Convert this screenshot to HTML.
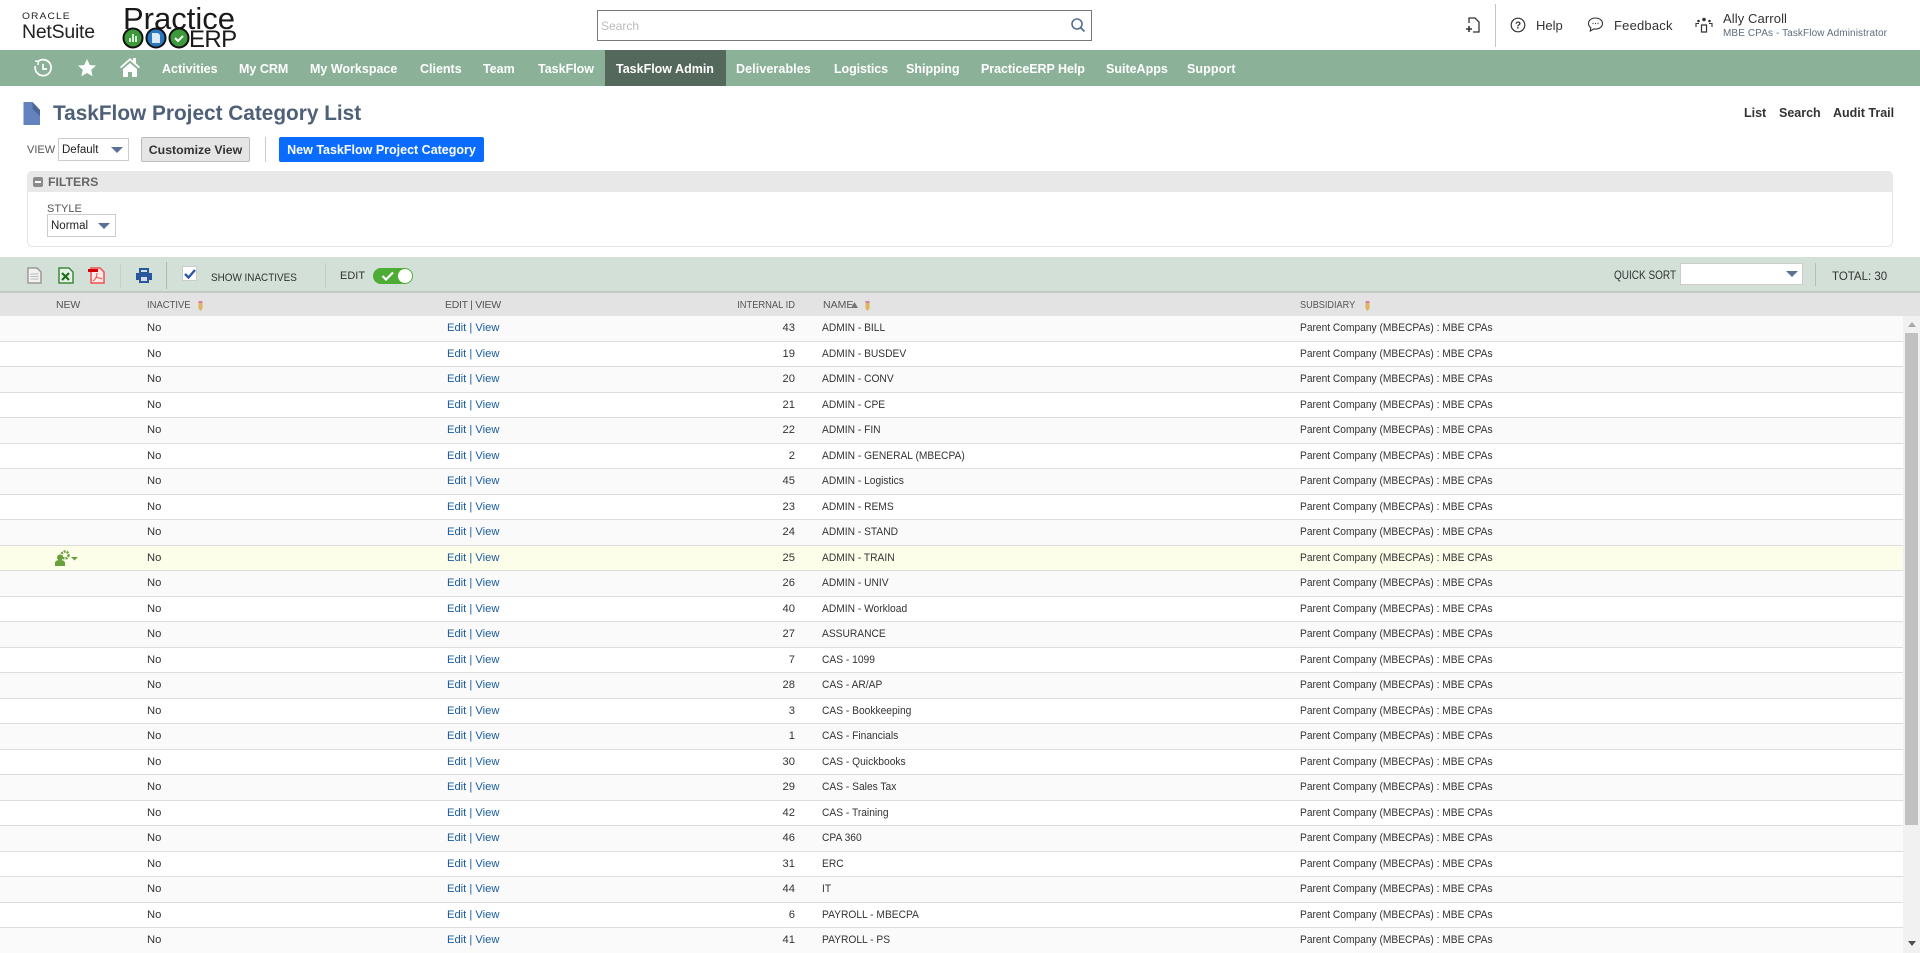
<!DOCTYPE html>
<html><head><meta charset="utf-8"><title>TaskFlow Project Category List</title>
<style>
html,body{margin:0;padding:0;background:#fff;width:1920px;height:953px;overflow:hidden;font-family:"Liberation Sans",sans-serif;color:#333}
.p{position:absolute;white-space:nowrap}
svg{position:absolute;display:block}
.nav{position:absolute;left:0;top:50px;width:1920px;height:36px;background:#8bb298}
.nav span{position:absolute;top:11px;font-size:12.5px;font-weight:bold;color:#fff;line-height:16px;white-space:nowrap}
.nav .act{position:absolute;left:605px;top:0;width:121px;height:36px;background:#54695b}
.lab{font-size:11px;color:#555;line-height:13px}
.sel{position:absolute;background:#fff;border:1px solid #ccc;box-sizing:border-box;font-size:11.5px;color:#222}
.arr{position:absolute;width:0;height:0;border-left:6px solid transparent;border-right:6px solid transparent;border-top:6px solid #5a7096}
.sep{position:absolute;width:1px;background:#bbb}
.th{position:absolute;top:0;font-size:10.5px;line-height:25px;color:#555;white-space:nowrap}
.sc{transform:scaleX(.9);transform-origin:left center}
.sr{transform:scaleX(.89);transform-origin:right center}
#rows{position:absolute;left:0;top:316px;width:1903px;height:637px;overflow:hidden}
.r{position:relative;height:25.5px;box-sizing:border-box;border-bottom:1px solid #ddd;font-size:11.2px;line-height:25.5px;color:#333;background:#fff}
.r:nth-child(odd){background:#fafafa}
.r.h{background:#fdfeea}
.r b{font-weight:normal;position:absolute;top:0;white-space:nowrap}
.n{left:147px}.e{left:447px;color:#1a5c9e}.i{right:1108px}
.m{left:822px;transform:scaleX(.915);transform-origin:left center}
.s{left:1300px;transform:scaleX(.913);transform-origin:left center}
</style></head><body>

<div class="p" style="left:22px;top:12px;font-size:9.5px;letter-spacing:1px;color:#222;transform:scaleX(1.08);transform-origin:left;line-height:10px">ORACLE</div>
<div class="p" style="left:22px;top:21px;font-size:19.5px;color:#222;line-height:23px;letter-spacing:-.25px">NetSuite</div>

<div class="p" style="left:123px;top:1px;font-size:31px;line-height:36px;color:#1a1a1a">Practice</div>
<svg style="left:122px;top:27px" width="70" height="22" viewBox="0 0 70 22">
<circle cx="11" cy="11" r="9.5" fill="#3c9a3c" stroke="#111" stroke-width="2"/><circle cx="34" cy="11" r="9.5" fill="#2a78c0" stroke="#111" stroke-width="2"/><circle cx="57" cy="11" r="9.5" fill="#3c9a3c" stroke="#111" stroke-width="2"/>
<path d="M7 15v-4h2v4zM10 15V7h2v8zM13 15v-6h2v6z" fill="#d8efd8"/><path d="M30 6h6l2 2v8h-8z" fill="#dcebf8"/><path d="M53 11l3 3 5-5" fill="none" stroke="#fff" stroke-width="2"/></svg>
<div class="p" style="left:189px;top:28px;font-size:24px;line-height:24px;color:#1a1a1a;letter-spacing:-.6px">ERP</div>

<div class="p" style="left:597px;top:10px;width:495px;height:31px;box-sizing:border-box;border:1px solid #777;background:#fff"></div>
<div class="p" style="left:601px;top:19px;font-size:12px;color:#bbb;line-height:14px">Search</div>
<svg style="left:1070px;top:17px" width="16" height="16" viewBox="0 0 16 16"><circle cx="7" cy="7" r="5" fill="none" stroke="#56708f" stroke-width="1.6"/><path d="M10.5 10.5L14.5 14.5" stroke="#56708f" stroke-width="1.8"/></svg>

<svg style="left:1465px;top:16px" width="18" height="18" viewBox="0 0 18 18" fill="none" stroke="#333" stroke-width="1.3"><path d="M4 7V2h6l4 4v10H8"/><path d="M4 10v6M1 13h6" stroke-width="1.6"/></svg>
<div class="sep" style="left:1495px;top:4px;height:43px;background:#c4c4c4"></div>
<svg style="left:1510px;top:17px" width="16" height="16" viewBox="0 0 16 16"><circle cx="8" cy="8" r="6.8" fill="none" stroke="#333" stroke-width="1.2"/><text x="8" y="11.5" font-size="10" text-anchor="middle" font-family="Liberation Sans" font-weight="bold" fill="#333">?</text></svg>
<div class="p" style="left:1536px;top:18px;font-size:13px;line-height:15px;color:#333">Help</div>
<svg style="left:1587px;top:16px" width="17" height="17" viewBox="0 0 17 17"><path d="M8.5 2C4.500 2 1.500 4.300 1.500 7.500c0 1.800 1 3.200 2.300 4.200L3.300 15l3.400-2.100c.6.100 1.200.2 1.800.2 4 0 7-2.500 7-5.600S12.500 2 8.500 2z" fill="none" stroke="#333" stroke-width="1.1"/><path d="M5.500 7.500h1M8 7.500h1M10.500 7.500h1" stroke="#333" stroke-width="1.3"/></svg>
<div class="p" style="left:1614px;top:18px;font-size:13px;line-height:15px;color:#333;letter-spacing:.2px">Feedback</div>
<svg style="left:1695px;top:16px" width="18" height="18" viewBox="0 0 18 18" fill="#333"><circle cx="9" cy="3.500" r="1.800"/><circle cx="3.500" cy="5" r="1.300"/><circle cx="14.500" cy="5" r="1.300"/><path d="M6.500 9h5v7h-5z" fill="none" stroke="#333" stroke-width="1.200"/><path d="M1 11V7.500h3M17 11V7.500h-3" fill="none" stroke="#333" stroke-width="1.100"/></svg>
<div class="p" style="left:1723px;top:11px;font-size:13px;line-height:15px;color:#333;letter-spacing:.1px">Ally Carroll</div>
<div class="p" style="left:1723px;top:28px;font-size:10px;line-height:12px;color:#5f6d7c;letter-spacing:.1px">MBE CPAs - TaskFlow Administrator</div>

<div class="nav">
<div class="act"></div>
<svg style="left:33px;top:8px" width="20" height="20" viewBox="0 0 20 20" fill="none" stroke="#fff" stroke-width="1.7"><path d="M5 3.500A8 8 0 1 1 2.300 8"/><path d="M2 3l3.300.3L5 7" stroke-width="1.500"/><path d="M10 6v5H14"/></svg>
<svg style="left:77px;top:8px" width="20" height="20" viewBox="0 0 20 20"><path d="M10 1l2.700 6 6.300.6-4.800 4.300 1.400 6.300L10 15l-5.600 3.200 1.400-6.300L1 7.600 7.300 7z" fill="#fff"/></svg>
<svg style="left:119px;top:6px" width="22" height="22" viewBox="0 0 22 22"><path d="M1 11L11 2l3 2.700V2h3v5.400L21 11l-1.200 1.300L11 4.500 2.200 12.300z" fill="#fff"/><path d="M4 13l7-6 7 6v8h-5v-5H9v5H4z" fill="#fff"/></svg>
<span style="left:162px">Activities</span>
<span style="left:239px">My CRM</span>
<span style="left:310px">My Workspace</span>
<span style="left:420px">Clients</span>
<span style="left:483px">Team</span>
<span style="left:538px">TaskFlow</span>
<span style="left:616px">TaskFlow Admin</span>
<span style="left:736px;letter-spacing:.1px">Deliverables</span>
<span style="left:834px;letter-spacing:-.1px">Logistics</span>
<span style="left:906px">Shipping</span>
<span style="left:981px;letter-spacing:-.05px">PracticeERP Help</span>
<span style="left:1106px">SuiteApps</span>
<span style="left:1187px;letter-spacing:.1px">Support</span>
</div>

<svg style="left:22px;top:101px" width="19" height="25" viewBox="0 0 19 25"><path d="M1.500 1h9L18 9v15H1.500z" fill="#6283bd"/><path d="M10.500 1L18 9v6L10.500 8z" fill="#4b6796"/></svg>
<div class="p" style="left:53px;top:101px;font-size:20.8px;line-height:25px;font-weight:bold;color:#4d5f79">TaskFlow Project Category List</div>
<div class="p" style="left:1744px;top:106px;font-size:12.5px;line-height:15px;font-weight:bold;color:#333">List</div>
<div class="p" style="left:1779px;top:106px;font-size:12.5px;line-height:15px;font-weight:bold;color:#333">Search</div>
<div class="p" style="left:1833px;top:106px;font-size:12.5px;line-height:15px;font-weight:bold;color:#333">Audit Trail</div>

<div class="p lab" style="left:27px;top:144px">VIEW</div>
<div class="sel" style="left:58px;top:138px;width:71px;height:23px;line-height:23px;padding-left:3px">Default<div class="arr" style="left:52px;top:8px"></div></div>
<div class="p" style="left:141px;top:137px;width:109px;height:25px;box-sizing:border-box;background:#e5e5e5;border:1px solid #bbb;border-radius:2px;font-size:12.3px;font-weight:bold;color:#333;text-align:center;line-height:25px">Customize View</div>
<div class="sep" style="left:265px;top:137px;height:25px;background:#ccc"></div>
<div class="p" style="left:279px;top:137px;width:205px;height:25px;background:#0a6cff;border-radius:2px;font-size:12.5px;font-weight:bold;color:#fff;text-align:center;line-height:27px">New TaskFlow Project Category</div>

<div class="p" style="left:27px;top:171px;width:1866px;height:76px;box-sizing:border-box;border:1px solid #e4e4e4;border-radius:5px;background:#fff"></div>
<div class="p" style="left:27px;top:171px;width:1866px;height:21px;background:#e8e8e8;border-radius:5px 5px 0 0"></div>
<div class="p" style="left:33px;top:177px;width:10px;height:10px;background:#8c8c8c;border-radius:2px"></div>
<div class="p" style="left:35px;top:181px;width:6px;height:2px;background:#fff"></div>
<div class="p" style="left:48px;top:175px;font-size:12.3px;line-height:15px;font-weight:bold;color:#666">FILTERS</div>
<div class="p lab" style="left:47px;top:203px">STYLE</div>
<div class="sel" style="left:47px;top:214px;width:69px;height:23px;line-height:23px;padding-left:3px">Normal<div class="arr" style="left:50px;top:8px"></div></div>

<div class="p" style="left:0;top:257px;width:1920px;height:35px;background:#d2e0d7"></div>
<div class="p" style="left:0;top:291px;width:1920px;height:2px;background:#c4cbc6"></div>
<svg style="left:27px;top:267px" width="15" height="17" viewBox="0 0 15 17"><path d="M1 1h9l4 4v11H1z" fill="#f2f2f2" stroke="#999" stroke-width="1.5"/><path d="M3.500 7h8M3.500 9.500h8M3.500 12h8" stroke="#bbb"/></svg>
<svg style="left:58px;top:267px" width="16" height="17" viewBox="0 0 16 17"><path d="M1 1h10l4 4v11H1z" fill="#e8f1e8" stroke="#3c8a3c" stroke-width="1.5"/><path d="M4 6l7 7M11 6l-7 7" stroke="#1e6e1e" stroke-width="2.2"/></svg>
<svg style="left:88px;top:267px" width="17" height="17" viewBox="0 0 17 17"><path d="M3 1h9l4 4v11H3z" fill="#fbe9e9" stroke="#f05050" stroke-width="1.5"/><path d="M0 2h10v3H0z" fill="#d30000"/><path d="M9 6c0 4-2 7-4 8M8 10c2 1 4 1 6 2" fill="none" stroke="#f05050"/></svg>
<div class="sep" style="left:120px;top:264px;height:24px;background:#c3d0c8"></div>
<svg style="left:135px;top:267px" width="18" height="17" viewBox="0 0 18 17"><path d="M4 1h10v5H4zM1 6h16v7h-3v3H4v-3H1z" fill="#28579b"/><path d="M6 10h6v4H6z" fill="#d5dfe9"/><path d="M6 3h6v2H6z" fill="#d5dfe9"/></svg>
<div class="sep" style="left:166px;top:262px;height:27px;background:#b0b8b2"></div>
<div class="p" style="left:182px;top:266px;width:15px;height:15px;background:#fff;border:1px solid #ccc;box-sizing:border-box"></div>
<svg style="left:184px;top:268px" width="12" height="11" viewBox="0 0 12 11"><path d="M1 6l3.500 3.500L11 2" fill="none" stroke="#2a5aa0" stroke-width="2.4"/></svg>
<div class="p sc" style="left:211px;top:272px;font-size:11px;line-height:13px;color:#333">SHOW INACTIVES</div>
<div class="sep" style="left:325px;top:263px;height:25px;background:#c3d0c8"></div>
<div class="p" style="left:340px;top:270px;font-size:11px;line-height:13px;color:#333">EDIT</div>
<div class="p" style="left:373px;top:268px;width:40px;height:16px;background:#4dac34;border-radius:8px"></div>
<div class="p" style="left:398px;top:269px;width:14px;height:14px;background:#fff;border-radius:50%"></div>
<svg style="left:381px;top:271px" width="14" height="10" viewBox="0 0 14 10"><path d="M1.500 5l3.500 3.500L12 1.500" fill="none" stroke="#fff" stroke-width="2.2"/></svg>
<div class="p" style="left:1614px;top:270px;font-size:11.5px;line-height:13px;color:#333;transform:scaleX(.87);transform-origin:left center">QUICK SORT</div>
<div class="sel" style="left:1680px;top:263px;width:123px;height:22px"><div class="arr" style="left:105px;top:7px"></div></div>
<div class="sep" style="left:1815px;top:263px;height:23px"></div>
<div class="p" style="left:1832px;top:270px;font-size:11.5px;line-height:14px;color:#333">TOTAL: 30</div>

<div class="p" style="left:0;top:293px;width:1920px;height:23px;background:#e3e3e3">
<div class="th" style="left:56px;letter-spacing:-.1px">NEW</div>
<div class="th sc" style="left:147px">INACTIVE</div>
<div class="th" style="left:445px;letter-spacing:-.3px">EDIT | VIEW</div>
<div class="th sr" style="right:1125px">INTERNAL ID</div>
<div class="th" style="left:823px">NAME</div>
<svg style="left:851px;top:9px" width="7" height="6" viewBox="0 0 7 6"><path d="M3.500 0L7 6H0z" fill="#777"/></svg>
<div class="th" style="left:1300px;transform:scaleX(.87);transform-origin:left center">SUBSIDIARY</div>
<svg style="left:198px;top:8px" width="5" height="10" viewBox="0 0 5 10"><path d="M.5 0h4v7.500L2.500 10 .5 7.500z" fill="#e0b35c"/><path d="M.5 0h4v2h-4z" fill="#d87ba8"/></svg>
<svg style="left:865px;top:8px" width="5" height="10" viewBox="0 0 5 10"><path d="M.5 0h4v7.500L2.500 10 .5 7.500z" fill="#e0b35c"/><path d="M.5 0h4v2h-4z" fill="#d87ba8"/></svg>
<svg style="left:1365px;top:8px" width="5" height="10" viewBox="0 0 5 10"><path d="M.5 0h4v7.500L2.500 10 .5 7.500z" fill="#e0b35c"/><path d="M.5 0h4v2h-4z" fill="#d87ba8"/></svg>
</div>

<div id="rows">
<div class="r"><b class="n">No</b><b class="e">Edit | View</b><b class="i">43</b><b class="m">ADMIN - BILL</b><b class="s">Parent Company (MBECPAs) : MBE CPAs</b></div>
<div class="r"><b class="n">No</b><b class="e">Edit | View</b><b class="i">19</b><b class="m">ADMIN - BUSDEV</b><b class="s">Parent Company (MBECPAs) : MBE CPAs</b></div>
<div class="r"><b class="n">No</b><b class="e">Edit | View</b><b class="i">20</b><b class="m">ADMIN - CONV</b><b class="s">Parent Company (MBECPAs) : MBE CPAs</b></div>
<div class="r"><b class="n">No</b><b class="e">Edit | View</b><b class="i">21</b><b class="m">ADMIN - CPE</b><b class="s">Parent Company (MBECPAs) : MBE CPAs</b></div>
<div class="r"><b class="n">No</b><b class="e">Edit | View</b><b class="i">22</b><b class="m">ADMIN - FIN</b><b class="s">Parent Company (MBECPAs) : MBE CPAs</b></div>
<div class="r"><b class="n">No</b><b class="e">Edit | View</b><b class="i">2</b><b class="m">ADMIN - GENERAL (MBECPA)</b><b class="s">Parent Company (MBECPAs) : MBE CPAs</b></div>
<div class="r"><b class="n">No</b><b class="e">Edit | View</b><b class="i">45</b><b class="m">ADMIN - Logistics</b><b class="s">Parent Company (MBECPAs) : MBE CPAs</b></div>
<div class="r"><b class="n">No</b><b class="e">Edit | View</b><b class="i">23</b><b class="m">ADMIN - REMS</b><b class="s">Parent Company (MBECPAs) : MBE CPAs</b></div>
<div class="r"><b class="n">No</b><b class="e">Edit | View</b><b class="i">24</b><b class="m">ADMIN - STAND</b><b class="s">Parent Company (MBECPAs) : MBE CPAs</b></div>
<div class="r h"><svg style="left:54px;top:3px" width="24" height="18" viewBox="0 0 24 18" fill="#6aa03c"><circle cx="6" cy="8.500" r="3"/><path d="M1 17v-3c0-2 2-3 5-3s5 1 5 3v3z"/><circle cx="11" cy="6" r="3.500" fill="none" stroke="#6aa03c" stroke-width="2.400" stroke-dasharray="2 1"/><path d="M17 8h7l-3.500 3.500z"/></svg><b class="n">No</b><b class="e">Edit | View</b><b class="i">25</b><b class="m">ADMIN - TRAIN</b><b class="s">Parent Company (MBECPAs) : MBE CPAs</b></div>
<div class="r"><b class="n">No</b><b class="e">Edit | View</b><b class="i">26</b><b class="m">ADMIN - UNIV</b><b class="s">Parent Company (MBECPAs) : MBE CPAs</b></div>
<div class="r"><b class="n">No</b><b class="e">Edit | View</b><b class="i">40</b><b class="m">ADMIN - Workload</b><b class="s">Parent Company (MBECPAs) : MBE CPAs</b></div>
<div class="r"><b class="n">No</b><b class="e">Edit | View</b><b class="i">27</b><b class="m">ASSURANCE</b><b class="s">Parent Company (MBECPAs) : MBE CPAs</b></div>
<div class="r"><b class="n">No</b><b class="e">Edit | View</b><b class="i">7</b><b class="m">CAS - 1099</b><b class="s">Parent Company (MBECPAs) : MBE CPAs</b></div>
<div class="r"><b class="n">No</b><b class="e">Edit | View</b><b class="i">28</b><b class="m">CAS - AR/AP</b><b class="s">Parent Company (MBECPAs) : MBE CPAs</b></div>
<div class="r"><b class="n">No</b><b class="e">Edit | View</b><b class="i">3</b><b class="m">CAS - Bookkeeping</b><b class="s">Parent Company (MBECPAs) : MBE CPAs</b></div>
<div class="r"><b class="n">No</b><b class="e">Edit | View</b><b class="i">1</b><b class="m">CAS - Financials</b><b class="s">Parent Company (MBECPAs) : MBE CPAs</b></div>
<div class="r"><b class="n">No</b><b class="e">Edit | View</b><b class="i">30</b><b class="m">CAS - Quickbooks</b><b class="s">Parent Company (MBECPAs) : MBE CPAs</b></div>
<div class="r"><b class="n">No</b><b class="e">Edit | View</b><b class="i">29</b><b class="m">CAS - Sales Tax</b><b class="s">Parent Company (MBECPAs) : MBE CPAs</b></div>
<div class="r"><b class="n">No</b><b class="e">Edit | View</b><b class="i">42</b><b class="m">CAS - Training</b><b class="s">Parent Company (MBECPAs) : MBE CPAs</b></div>
<div class="r"><b class="n">No</b><b class="e">Edit | View</b><b class="i">46</b><b class="m">CPA 360</b><b class="s">Parent Company (MBECPAs) : MBE CPAs</b></div>
<div class="r"><b class="n">No</b><b class="e">Edit | View</b><b class="i">31</b><b class="m">ERC</b><b class="s">Parent Company (MBECPAs) : MBE CPAs</b></div>
<div class="r"><b class="n">No</b><b class="e">Edit | View</b><b class="i">44</b><b class="m">IT</b><b class="s">Parent Company (MBECPAs) : MBE CPAs</b></div>
<div class="r"><b class="n">No</b><b class="e">Edit | View</b><b class="i">6</b><b class="m">PAYROLL - MBECPA</b><b class="s">Parent Company (MBECPAs) : MBE CPAs</b></div>
<div class="r"><b class="n">No</b><b class="e">Edit | View</b><b class="i">41</b><b class="m">PAYROLL - PS</b><b class="s">Parent Company (MBECPAs) : MBE CPAs</b></div>
</div>

<div class="p" style="left:1903px;top:316px;width:17px;height:637px;background:#f1f1f1"></div>
<div class="p" style="left:1905px;top:333px;width:13px;height:492px;background:#c1c1c1"></div>
<svg style="left:1908px;top:322px" width="8" height="5" viewBox="0 0 8 5"><path d="M4 0l4 5H0z" fill="#a8a8a8"/></svg>
<svg style="left:1908px;top:941px" width="8" height="5" viewBox="0 0 8 5"><path d="M4 5L8 0H0z" fill="#505050"/></svg>
</body></html>
